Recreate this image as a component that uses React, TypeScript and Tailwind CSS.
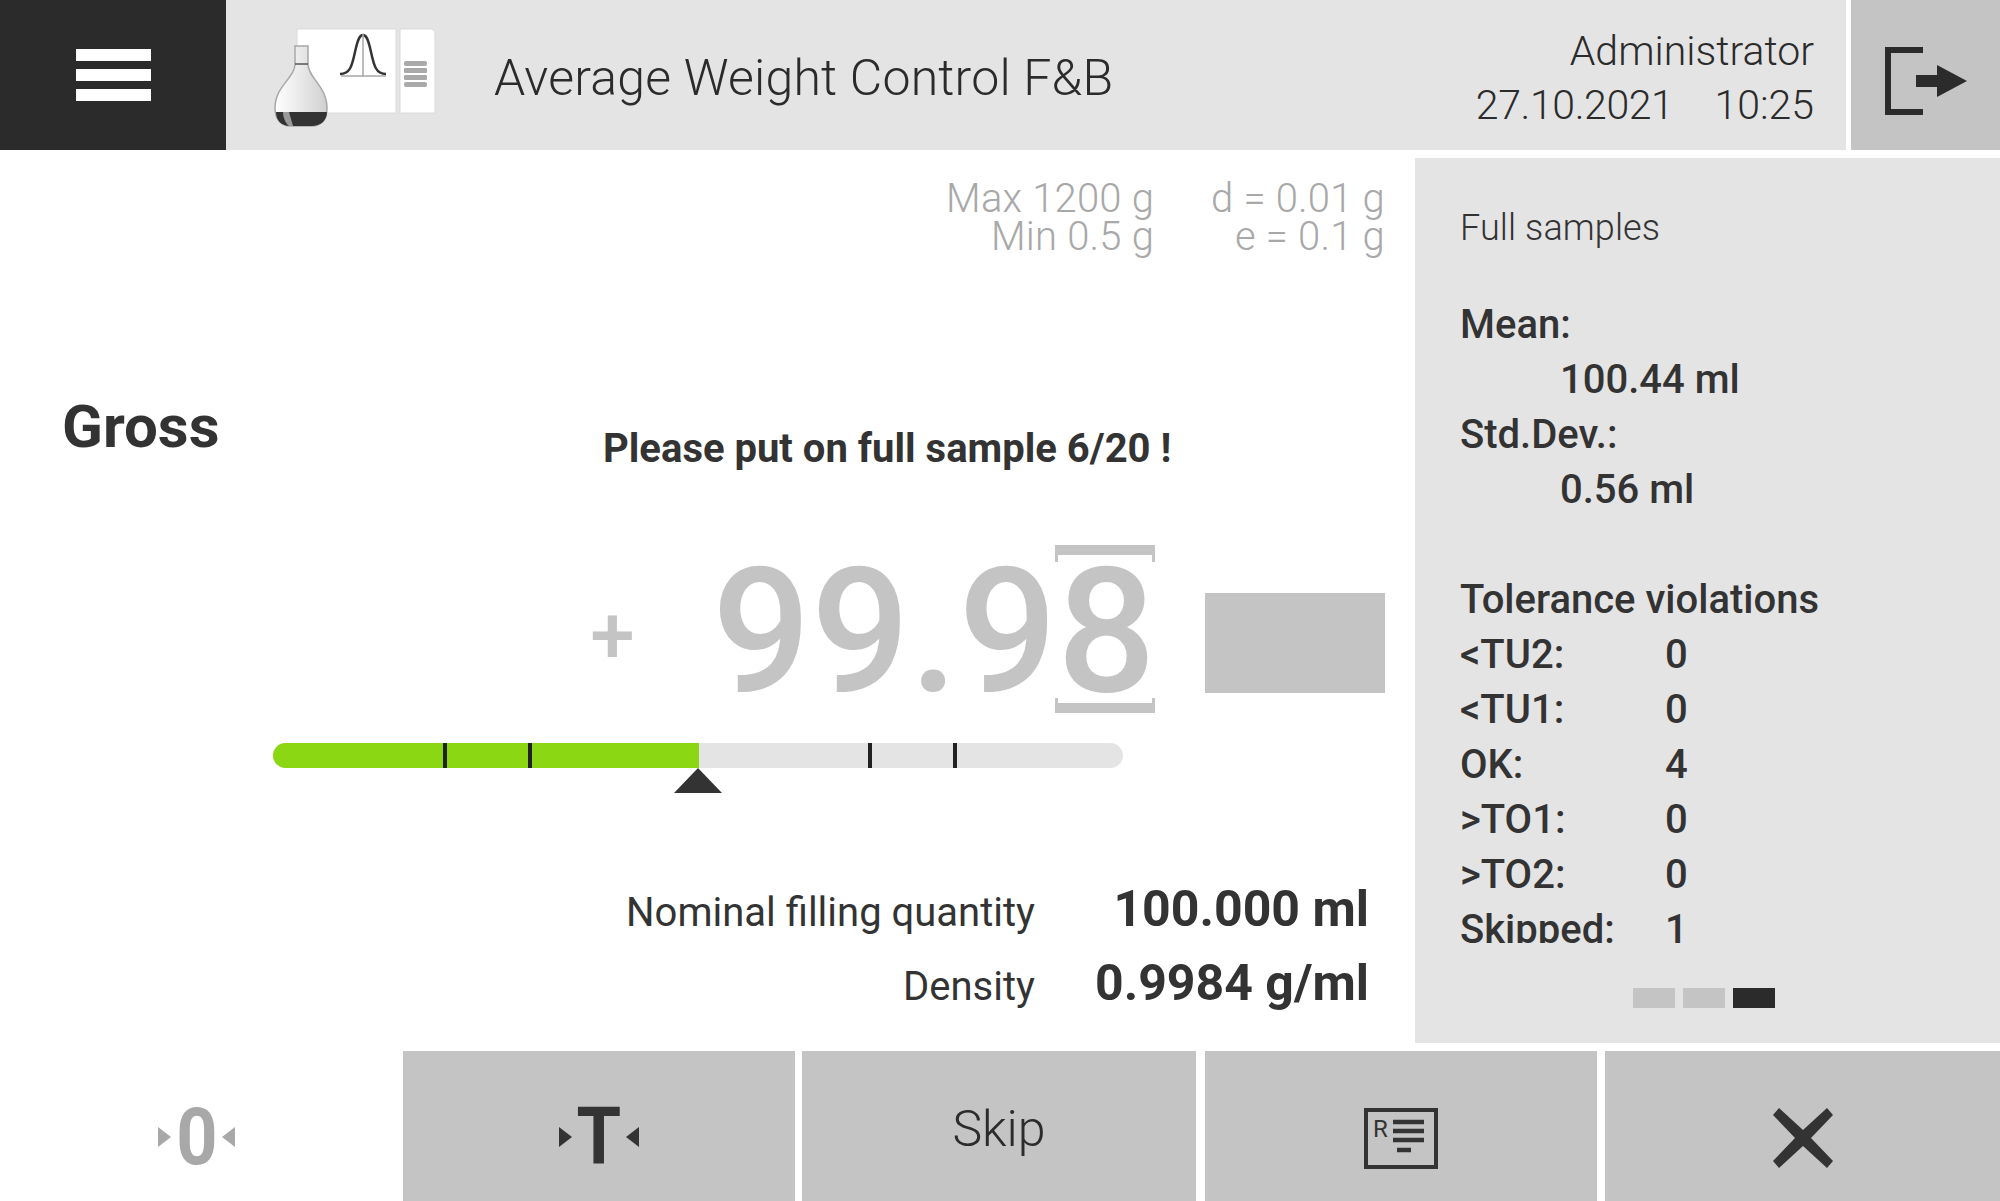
const font = { fontFamily: "Roboto, sans-serif" };

function MenuIcon() {
  return (
    <div className="flex flex-col gap-[8px]">
      <div className="w-[75px] h-[12px] bg-white" />
      <div className="w-[75px] h-[12px] bg-white" />
      <div className="w-[75px] h-[12px] bg-white" />
    </div>
  );
}

function Logo() {
  return (
    <svg width="170" height="104" viewBox="0 0 170 104" className="shrink-0">
      <defs>
        <linearGradient id="glass" x1="0" x2="1" y1="0" y2="0">
          <stop offset="0" stopColor="#ffffff" />
          <stop offset="0.55" stopColor="#e6e6e6" />
          <stop offset="1" stopColor="#cfcfcf" />
        </linearGradient>
      </defs>
      <path d="M27 3 H126 V87 H27 Z" fill="#fff" stroke="#dadada" strokeWidth="1" />
      <path d="M130 3 H160 Q165 3 165 8 V87 H130 Z" fill="#fff" stroke="#dadada" strokeWidth="1" />
      <path d="M70 48 C80 48 82 40 85 26 C88 12 90 9 93 9 C96 9 98 12 101 26 C104 40 106 48 116 48" fill="none" stroke="#333" strokeWidth="2.5" />
      <path d="M93 8 V51 M71 50 H116" stroke="#a8a8a8" strokeWidth="1.5" fill="none" />
      <rect x="134" y="35" width="23" height="5" rx="2" fill="#a9a9a9" />
      <rect x="134" y="42" width="23" height="5" rx="1" fill="#a9a9a9" />
      <rect x="134" y="49" width="23" height="5" rx="1" fill="#a9a9a9" />
      <rect x="134" y="56" width="23" height="5" rx="2" fill="#a9a9a9" />
      <path d="M25 20 H38 V38 C38 52 57 60 57 82 C57 94 50 100 42 100 H20 C12 100 5 94 5 82 C5 60 25 52 25 38 Z" fill="url(#glass)" stroke="#a8a8a8" strokeWidth="1.5" />
      <path d="M25 38 H38" stroke="#555" strokeWidth="1.5" />
      <path d="M6 86 H57 C57 95 50 100 42 100 H20 C12 100 6 95 6 86 Z" fill="#333" />
      <path d="M13 86 H19 L23 100 H19 C16 98 13 92 13 86 Z" fill="#9a9a9a" />
    </svg>
  );
}

function LogoutIcon() {
  return (
    <svg width="82" height="68" viewBox="0 0 82 68">
      <path d="M38 3 H3 V65 H38" fill="none" stroke="#2b2b2b" strokeWidth="6" />
      <path d="M31 28 H52 V18 L82 34 L52 50 V40 H31 Z" fill="#2b2b2b" />
    </svg>
  );
}

function ReportIcon() {
  return (
    <svg width="74" height="61" viewBox="0 0 74 61" style={font}>
      <rect x="2" y="2" width="70" height="57" fill="none" stroke="#333" strokeWidth="4" />
      <text x="9" y="29" fontSize="24" fill="#333">R</text>
      <path d="M29 14 H60 M29 23 H60 M29 32 H60" stroke="#333" strokeWidth="4.5" />
      <path d="M33 42 H47" stroke="#333" strokeWidth="4.5" />
    </svg>
  );
}

function CloseIcon() {
  return (
    <svg width="60" height="60" viewBox="0 0 60 60">
      <path d="M6 0 L30 22 L54 0 L60 7 L38 30 L60 53 L54 60 L30 38 L6 60 L0 53 L22 30 L0 7 Z" fill="#333" />
    </svg>
  );
}

function Arrow({ dir, color }: { dir: "left" | "right"; color: string }) {
  return (
    <svg width="13" height="20" viewBox="0 0 13 20" className="shrink-0">
      <path d={dir === "right" ? "M0 0 L13 10 L0 20 Z" : "M13 0 L0 10 L13 20 Z"} fill={color} />
    </svg>
  );
}

function Bracket() {
  return (
    <>
      <div className="absolute left-[-2px] right-[1px] top-[-24px] h-[17px] border-t-[10px] border-x-[3px] border-[#c4c4c4]" />
      <div className="absolute left-[-2px] right-[1px] bottom-[-18px] h-[15px] border-b-[10px] border-x-[3px] border-[#c4c4c4]" />
    </>
  );
}

const tolerance = [
  ["<TU2:", "0"],
  ["<TU1:", "0"],
  ["OK:", "4"],
  [">TO1:", "0"],
  [">TO2:", "0"],
  ["Skipped:", "1"],
];

export default function App() {
  return (
    <div className="w-[2000px] h-[1201px] overflow-hidden bg-white flex flex-col text-[#333]" style={font}>
      <header className="h-[150px] flex shrink-0">
        <div className="w-[226px] bg-[#2b2b2b] flex items-center justify-center">
          <MenuIcon />
        </div>
        <div className="w-[1620px] bg-[#e4e4e4] flex items-center pl-[44px] pr-[32px] pt-[6px]">
          <Logo />
          <h1 className="ml-[54px] text-[50px] font-light tracking-[0.2px] text-[#2b2b2b]">Average Weight Control F&amp;B</h1>
          <div className="ml-auto text-right text-[41px] font-light leading-[54px] text-[#2b2b2b]">
            <div>Administrator</div>
            <div className="flex justify-end gap-[41px]">
              <span className="tracking-[-0.4px]">27.10.2021</span>
              <span>10:25</span>
            </div>
          </div>
        </div>
        <div className="ml-[5px] w-[149px] bg-[#c4c4c4] flex items-center justify-center pt-[12px]">
          <LogoutIcon />
        </div>
      </header>

      <main className="h-[901px] flex shrink-0">
        <div className="w-[1415px] shrink-0 flex flex-col">
          <div className="mt-[30px] pr-[30px] flex justify-end gap-[57px] text-[40px] leading-[38px] font-light tracking-[0.2px] text-[#a8a8a8] text-right">
            <div>
              <div>Max 1200 g</div>
              <div>Min 0.5 g</div>
            </div>
            <div>
              <div>d = 0.01 g</div>
              <div>e = 0.1 g</div>
            </div>
          </div>

          <div className="mt-[141px] h-[77px] flex">
            <div className="w-[603px] pl-[62px] text-[60px] leading-[60px] font-bold">Gross</div>
            <div className="mt-[27px] text-[40px] leading-[50px] font-bold">Please put on full sample 6/20 !</div>
          </div>

          <div className="mt-[95px] h-[126px] flex items-end pl-[585px] text-[#c4c4c4]">
            <span className="w-[55px] text-center self-center translate-y-[4px] text-[80px] leading-[80px] font-medium">+</span>
            <span className="ml-[72px] text-[174px] leading-[126px] font-medium">99.9</span>
            <span className="relative text-[174px] leading-[126px] font-medium">
              8
              <Bracket />
            </span>
            <div className="ml-[49px] mb-[2px] w-[180px] h-[100px] bg-[#c4c4c4]" />
          </div>

          <div className="mt-[48px] ml-[273px] w-[850px] h-[25px] bg-[#e4e4e4] rounded-full relative overflow-hidden">
            <div className="h-full w-[426px] bg-[#8cd714]" />
            <div className="absolute top-0 left-[170px] w-[4px] h-full bg-[#222]" />
            <div className="absolute top-0 left-[255px] w-[4px] h-full bg-[#222]" />
            <div className="absolute top-0 left-[595px] w-[4px] h-full bg-[#222]" />
            <div className="absolute top-0 left-[680px] w-[4px] h-full bg-[#222]" />
          </div>
          <svg width="48" height="25" viewBox="0 0 48 25" className="ml-[674px] shrink-0">
            <path d="M24 0 L48 25 H0 Z" fill="#333" />
          </svg>

          <div className="mt-[86px] grid grid-cols-[1035px_334px] gap-y-[10px] items-baseline">
            <div className="text-right text-[40px] leading-[60px] font-normal">Nominal filling quantity</div>
            <div className="text-right text-[50px] leading-[60px] font-bold">100.000 ml</div>
            <div className="text-right text-[40px] leading-[60px] font-normal">Density</div>
            <div className="text-right text-[50px] leading-[60px] font-bold">0.9984 g/ml</div>
          </div>
        </div>

        <aside className="mt-[8px] h-[885px] w-[585px] bg-[#e4e4e4] pl-[45px] flex flex-col">
          <div className="mt-[43px] text-[36px] leading-[55px] font-light tracking-[0.1px]">Full samples</div>
          <div className="h-[646px] mt-[41px] overflow-hidden text-[40px] leading-[55px] font-medium">
            <div>Mean:</div>
            <div className="pl-[100px]">100.44 ml</div>
            <div>Std.Dev.:</div>
            <div className="pl-[100px]">0.56 ml</div>
            <div className="mt-[55px]">Tolerance violations</div>
            {tolerance.map(([label, value]) => (
              <div key={label} className="grid grid-cols-[205px_1fr]">
                <span>{label}</span>
                <span>{value}</span>
              </div>
            ))}
          </div>
          <div className="mt-[45px] ml-[173px] flex gap-[8px]">
            <div className="w-[42px] h-[20px] bg-[#c4c4c4]" />
            <div className="w-[42px] h-[20px] bg-[#c4c4c4]" />
            <div className="w-[42px] h-[20px] bg-[#2b2b2b]" />
          </div>
        </aside>
      </main>

      <footer className="h-[150px] flex shrink-0">
        <div className="w-[403px] flex items-center justify-center gap-[3px] pt-[22px] text-[#a8a8a8] -translate-x-[5px]">
          <Arrow dir="right" color="#a8a8a8" />
          <span className="text-[80px] leading-none font-bold scale-x-90">0</span>
          <Arrow dir="left" color="#a8a8a8" />
        </div>
        <div className="w-[392px] bg-[#c4c4c4] flex items-center justify-center gap-[2px] pt-[22px]">
          <Arrow dir="right" color="#333" />
          <span className="text-[80px] leading-none font-bold scale-x-90">T</span>
          <Arrow dir="left" color="#333" />
        </div>
        <div className="ml-[7px] w-[394px] bg-[#c4c4c4] flex items-center justify-center pt-[6px] text-[50px] font-light text-[#2b2b2b]">Skip</div>
        <div className="ml-[9px] w-[392px] bg-[#c4c4c4] flex items-center justify-center pt-[24px]">
          <ReportIcon />
        </div>
        <div className="ml-[8px] w-[395px] bg-[#c4c4c4] flex items-center justify-center pt-[24px]">
          <CloseIcon />
        </div>
      </footer>
    </div>
  );
}
